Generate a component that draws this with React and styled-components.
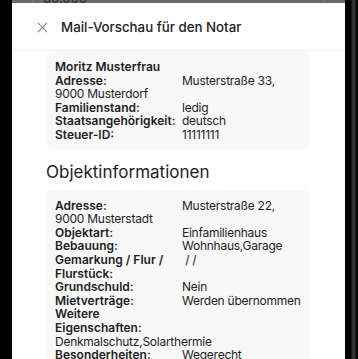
import styled, { createGlobalStyle } from "styled-components"

const Global = createGlobalStyle`
    html, body {
        margin: 0;
        background: #000;
    }
    body {
        font-family: Inter, "Noto Sans", sans-serif;
        color: #1d1d1f;
        -webkit-font-smoothing: antialiased;
    }
`;

const Screen = styled.div`
    width: 358px;
    height: 359px;
    overflow: hidden;
    background: #000;
    display: flex;
`;

const LeftEdge = styled.div`
    width: 12px;
    flex-shrink: 0;
    background: #000;
`;

const RightEdge = styled.div`
    width: 13px;
    flex-shrink: 0;
    background: linear-gradient(90deg, #000 0, #000 6px, #2a2a2a 7px, #3a3a3a 9px, #111 11px, #000 13px);
`;

const Column = styled.div`
    flex: 1;
    display: flex;
    flex-direction: column;
    min-width: 0;
`;

const Backdrop = styled.div`
    height: 3px;
    flex-shrink: 0;
    background: #6b6b6b;
    display: flex;
    align-items: flex-end;
    overflow: hidden;
    padding: 0 20px;
`;

const BackdropCard = styled.div`
    flex: 1;
    height: 3px;
    border-left: 1px solid #7a7a7a;
    border-right: 1px solid #7a7a7a;
    display: flex;
    align-items: flex-end;
    overflow: hidden;
`;

const BackdropText = styled.span`
    font-size: 13px;
    line-height: 9px;
    color: #2a2a2a;
    margin-left: 10px;
`;

const Sheet = styled.div`
    flex: 1;
    background: #fff;
    display: flex;
    flex-direction: column;
`;

const Header = styled.div`
    height: 47px;
    display: flex;
    align-items: center;
    gap: 13px;
    padding: 0 0 0 25px;
    border-bottom: 1px solid #f0f0f0;
    flex-shrink: 0;
`;

const Close = styled.svg`
    width: 11px;
    height: 11px;
    margin-top: 1px;
`;

const Title = styled.h1`
    margin: 0;
    font-size: 13.3px;
    font-weight: 500;
    color: #222;
`;

const Body = styled.div`
    padding: 0 35px 0 34px;
`;

const Card = styled.div`
    background: #f8f8f8;
    border-radius: 7px;
    padding: ${p => p.$top || 9}px 9px 7px 9px;
    font-size: 12px;
    line-height: 13.6px;
`;

const Name = styled.div`
    font-weight: 600;
`;

const Row = styled.div`
    &::after {
        content: "";
        display: block;
        clear: both;
    }
`;

const Label = styled.span`
    float: left;
    width: 127px;
    font-weight: 600;
`;

const Value = styled.span`
    letter-spacing: -0.25px;
`;

const Heading = styled.h2`
    margin: 12px 0 7px 0;
    font-size: 17px;
    line-height: 22px;
    font-weight: 400;
    color: #1d1d1f;
`;

const person = [
    ["Adresse:", "Musterstraße 33, 9000 Musterdorf"],
    ["Familienstand:", "ledig"],
    ["Staatsangehörigkeit:", "deutsch"],
    ["Steuer-ID:", "11111111"],
];

const objekt = [
    ["Adresse:", "Musterstraße 22, 9000 Musterstadt"],
    ["Objektart:", "Einfamilienhaus"],
    ["Bebauung:", "Wohnhaus,Garage"],
    ["Gemarkung / Flur / Flurstück:", "\u00a0/ /"],
    ["Grundschuld:", "Nein"],
    ["Mietverträge:", "Werden übernommen"],
    ["Weitere Eigenschaften:", "Denkmalschutz,Solarthermie"],
    ["Besonderheiten:", "Wegerecht"],
];

const Rows = ({ items }) => items.map(([label, value]) => (
    <Row key={label}>
        <Label>{label}</Label>
        <Value>{value}</Value>
    </Row>
));

const App = () => {
  return (
    <Screen>
        <Global />
        <LeftEdge />
        <Column>
            <Backdrop>
                <BackdropCard>
                    <BackdropText>30.000</BackdropText>
                </BackdropCard>
            </Backdrop>
            <Sheet>
                <Header>
                    {/* close icon */}
                    <Close viewBox="0 0 12 12">
                        <path d="M1 1L11 11M11 1L1 11" stroke="#7d7d7d" strokeWidth="1.1" fill="none" />
                    </Close>
                    <Title>Mail-Vorschau für den Notar</Title>
                </Header>
                <Body>
                    <Card>
                        <Name>Moritz Musterfrau</Name>
                        <Rows items={person} />
                    </Card>
                    <Heading>Objektinformationen</Heading>
                    <Card $top={9}>
                        <Rows items={objekt} />
                    </Card>
                </Body>
            </Sheet>
        </Column>
        <RightEdge />
    </Screen>
  )
}

export default App
